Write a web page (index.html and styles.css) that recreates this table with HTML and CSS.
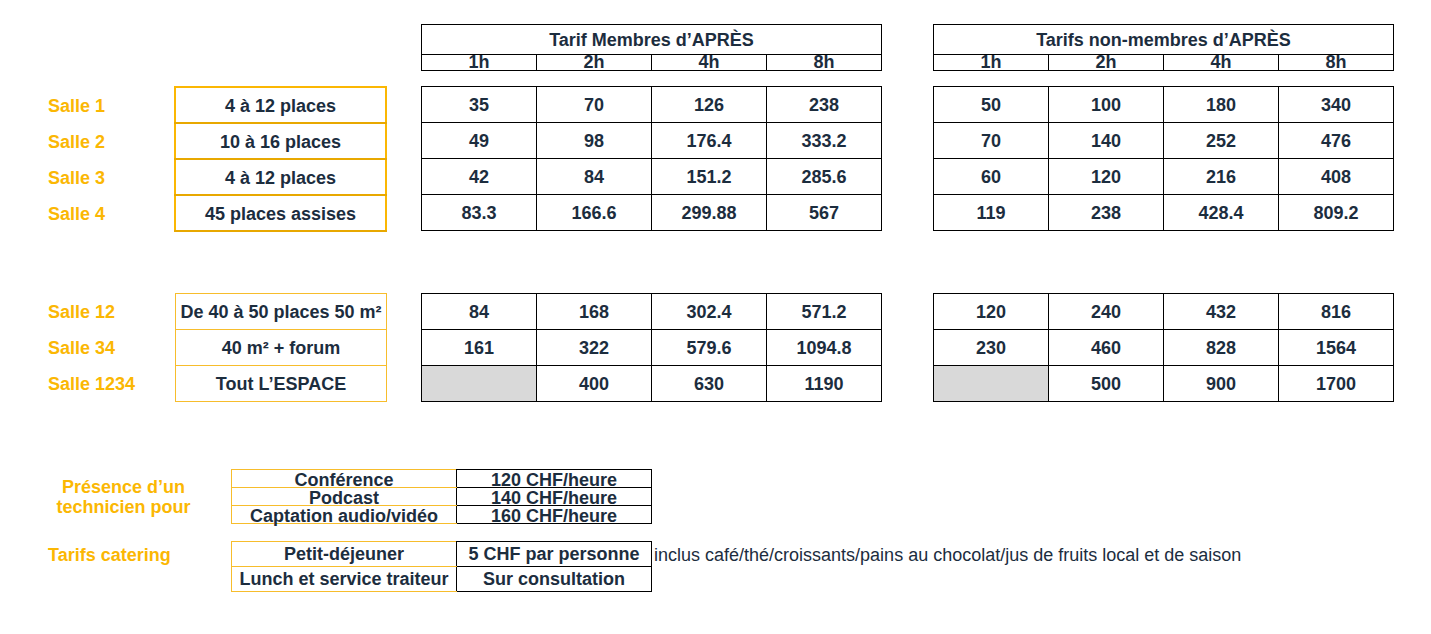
FILE: index.html
```html
<!DOCTYPE html>
<html lang="fr">
<head>
<meta charset="utf-8">
<title>Tarifs APRÈS</title>
<link rel="stylesheet" href="styles.css">
</head>
<body>
<div class="page">

  <section class="row head-row">
    <div class="spacer"></div>
    <table class="rate head">
      <tr><td colspan="4" class="title">Tarif Membres d’APRÈS</td></tr>
      <tr class="sub"><td>1h</td><td>2h</td><td>4h</td><td>8h</td></tr>
    </table>
    <table class="rate head">
      <tr><td colspan="4" class="title">Tarifs non-membres d’APRÈS</td></tr>
      <tr class="sub"><td>1h</td><td>2h</td><td>4h</td><td>8h</td></tr>
    </table>
  </section>

  <section class="row group g1">
    <div class="labels">
      <div class="label">Salle 1</div>
      <div class="label">Salle 2</div>
      <div class="label">Salle 3</div>
      <div class="label">Salle 4</div>
    </div>
    <table class="rooms thick">
      <tr><td>4 à 12 places</td></tr>
      <tr><td>10 à 16 places</td></tr>
      <tr><td>4 à 12 places</td></tr>
      <tr><td>45 places assises</td></tr>
    </table>
    <table class="rate">
      <tr><td>35</td><td>70</td><td>126</td><td>238</td></tr>
      <tr><td>49</td><td>98</td><td>176.4</td><td>333.2</td></tr>
      <tr><td>42</td><td>84</td><td>151.2</td><td>285.6</td></tr>
      <tr><td>83.3</td><td>166.6</td><td>299.88</td><td>567</td></tr>
    </table>
    <table class="rate">
      <tr><td>50</td><td>100</td><td>180</td><td>340</td></tr>
      <tr><td>70</td><td>140</td><td>252</td><td>476</td></tr>
      <tr><td>60</td><td>120</td><td>216</td><td>408</td></tr>
      <tr><td>119</td><td>238</td><td>428.4</td><td>809.2</td></tr>
    </table>
  </section>

  <section class="row group g2">
    <div class="labels">
      <div class="label">Salle 12</div>
      <div class="label">Salle 34</div>
      <div class="label">Salle 1234</div>
    </div>
    <table class="rooms thin">
      <tr><td>De 40 à 50 places 50 m²</td></tr>
      <tr><td>40 m² + forum</td></tr>
      <tr><td>Tout L’ESPACE</td></tr>
    </table>
    <table class="rate">
      <tr><td>84</td><td>168</td><td>302.4</td><td>571.2</td></tr>
      <tr><td>161</td><td>322</td><td>579.6</td><td>1094.8</td></tr>
      <tr><td class="empty"></td><td>400</td><td>630</td><td>1190</td></tr>
    </table>
    <table class="rate">
      <tr><td>120</td><td>240</td><td>432</td><td>816</td></tr>
      <tr><td>230</td><td>460</td><td>828</td><td>1564</td></tr>
      <tr><td class="empty"></td><td>500</td><td>900</td><td>1700</td></tr>
    </table>
  </section>

  <section class="row extra tech">
    <div class="side-label centered">Présence d’un<br>technicien pour</div>
    <table class="services">
      <tr><td class="svc">Conférence</td><td class="price">120 CHF/heure</td></tr>
      <tr><td class="svc">Podcast</td><td class="price">140 CHF/heure</td></tr>
      <tr><td class="svc">Captation audio/vidéo</td><td class="price">160 CHF/heure</td></tr>
    </table>
  </section>

  <section class="row extra catering">
    <div class="side-label top">Tarifs catering</div>
    <table class="services">
      <tr><td class="svc">Petit-déjeuner</td><td class="price">5 CHF par personne</td></tr>
      <tr><td class="svc">Lunch et service traiteur</td><td class="price">Sur consultation</td></tr>
    </table>
    <div class="note">inclus café/thé/croissants/pains au chocolat/jus de fruits local et de saison</div>
  </section>

</div>
</body>
</html>
```

FILE: styles.css
```css
html, body {
  margin: 0;
  padding: 0;
  background: #ffffff;
}

body {
  font-family: "Liberation Sans", Arial, sans-serif;
  font-size: 18px;
  color: #1c2d3e;
}

.page {
  padding: 24px 0 0 48px;
  width: 1383px;
}

.row {
  display: flex;
  align-items: flex-start;
}

table {
  border-collapse: collapse;
  table-layout: fixed;
}

td {
  padding: 0;
  text-align: center;
  font-weight: bold;
  white-space: nowrap;
}

/* header */
.spacer {
  width: 373px;
  flex: none;
}

.rate {
  width: 461px;
  flex: none;
}

.rate + .rate {
  margin-left: 51px;
}

.rate td {
  border: 1px solid #000000;
  height: 33px;
  padding-top: 2px;
}

.head td.title {
  height: 28px;
  line-height: 28px;
  padding-top: 1px;
}

.head tr.sub td {
  height: 15px;
  line-height: 15px;
  padding-top: 0;
  padding-bottom: 0;
}

/* groups */
.g1 {
  margin-top: 15px;
}

.g2 {
  margin-top: 61px;
}

.labels {
  width: 126px;
  flex: none;
  display: flex;
  flex-direction: column;
}

.label {
  height: 36px;
  line-height: 36px;
  padding-top: 2px;
  box-sizing: border-box;
  color: #fbb703;
  font-weight: bold;
}

.g2 .label {
  padding-top: 1px;
}

.rooms {
  width: 213px;
  flex: none;
  margin-right: 34px;
}

.rooms.thick {
  border-left: 1px solid #c99410;
}

.rooms.thick td {
  border: 2px solid #fbb703;
  border-bottom-color: #e8a800;
  height: 32px;
  padding-top: 2px;
}

.rooms.thin {
  width: 212px;
  margin-left: 1px;
}

.rooms.thin td {
  border: 1px solid #f7bd2c;
  height: 33px;
  padding-top: 2px;
}

.rate td.empty {
  background: #d9d9d9;
}

/* bottom sections */
.tech {
  margin-top: 67px;
}

.catering {
  margin-top: 17px;
}

.side-label {
  width: 183px;
  flex: none;
  color: #fbb703;
  font-weight: bold;
}

.side-label.centered {
  align-self: center;
  text-align: center;
  line-height: 20px;
  padding-right: 32px;
  box-sizing: border-box;
  width: 183px;
}

.side-label.top {
  line-height: 25px;
  padding-top: 2px;
}

.services {
  width: 421px;
  flex: none;
}

.services td.svc {
  width: 224px;
  border: 1px solid #f7bd2c;
  border-right-color: #000000;
}

.services td.price {
  border: 1px solid #000000;
}

.tech .services td {
  height: 14px;
  line-height: 14px;
  padding-top: 3px;
}

.catering .services td {
  height: 23px;
  line-height: 23px;
  padding-top: 1px;
}

.note {
  margin-left: 2px;
  line-height: 25px;
  padding-top: 2px;
  white-space: nowrap;
}
```
